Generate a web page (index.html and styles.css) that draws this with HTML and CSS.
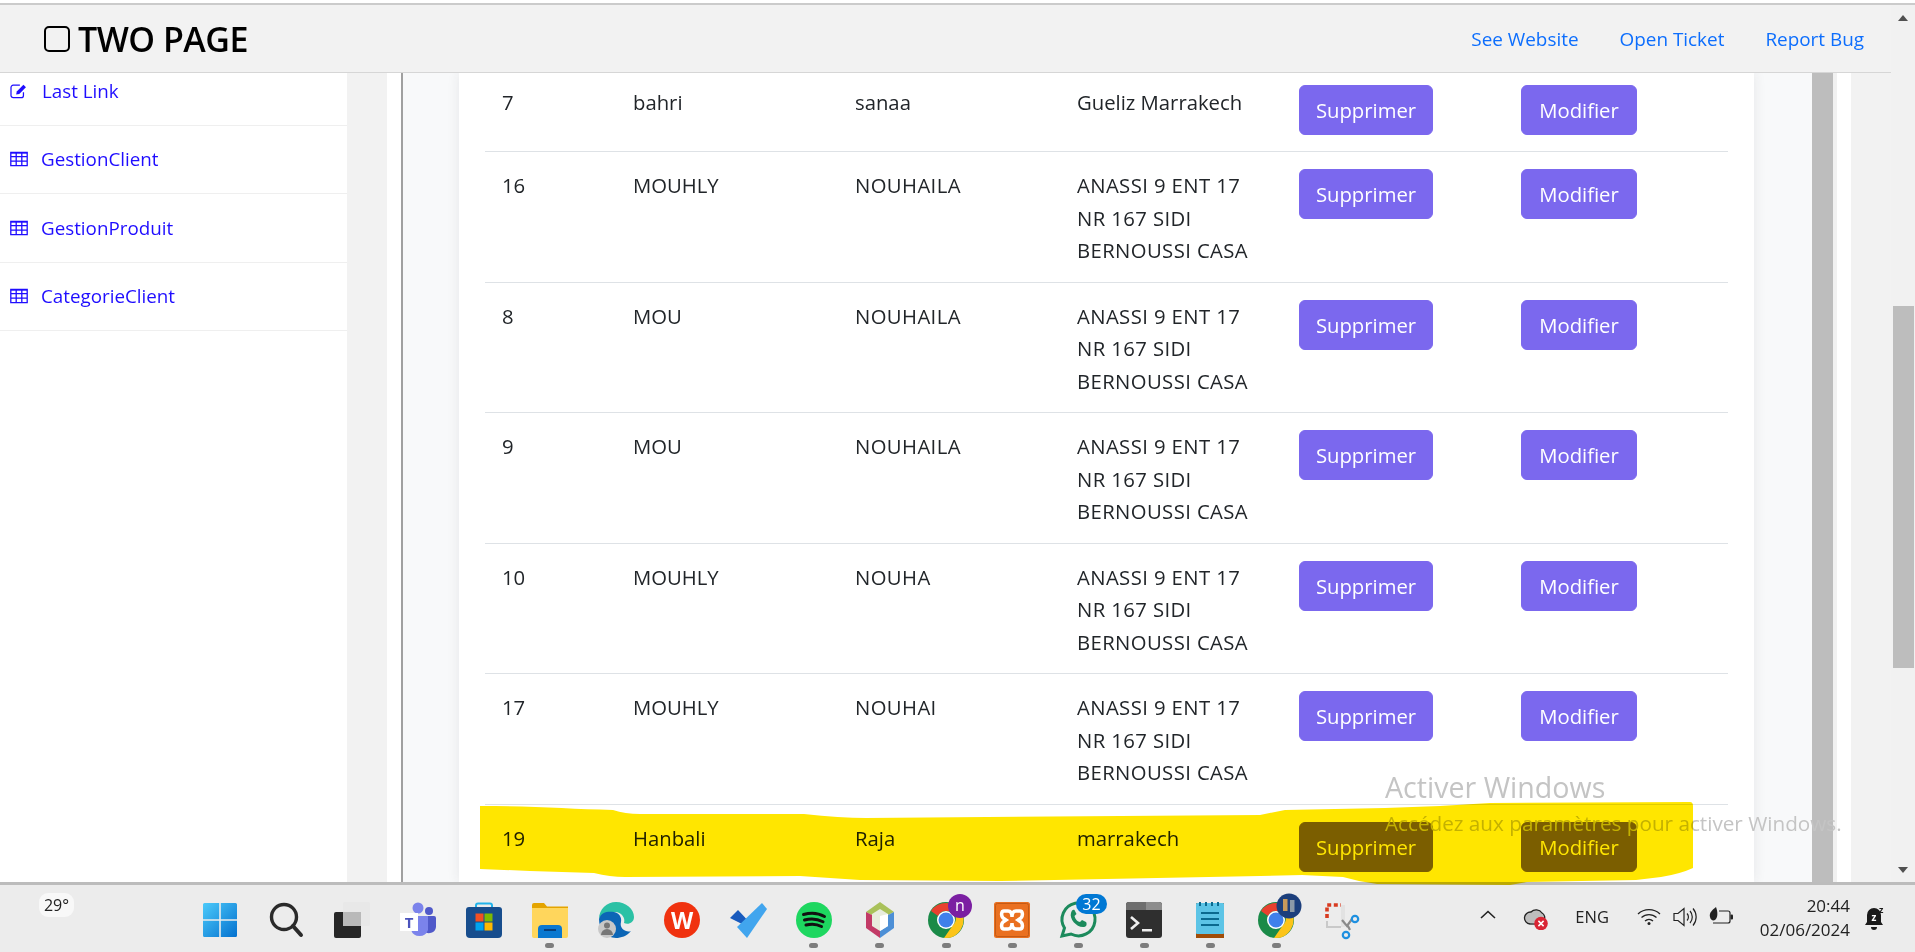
FILE: index.html
```html
<!DOCTYPE html>
<html lang="fr">
<head>
<meta charset="utf-8">
<title>TWO PAGE</title>
<link rel="stylesheet" href="styles.css">
</head>
<body>
<div class="screen">
  <div class="topline"></div>
  <div class="window">
    <div class="app">
      <header class="header">
        <div class="brand"><span class="brand-box"></span><span>TWO PAGE</span></div>
        <nav class="toplinks"><a>See Website</a><a>Open Ticket</a><a>Report Bug</a></nav>
      </header>
      <div class="main">
        <aside class="sidebar">
          <a class="side-item first">
            <svg class="side-icon" viewBox="0 0 20 18"><path d="M15 10.500V14a2.500 2.500 0 0 1-2.500 2.500h-9A2.500 2.500 0 0 1 1 14V5a2.500 2.500 0 0 1 2.500-2.500H11" fill="none" stroke="#1f0dff" stroke-width="1.400"/><path d="M7.500 9.500 15 2l2.800 2.800-7.500 7.500-3.500.6z" fill="#1f0dff"/></svg>
            <span class="side-text wide">Last Link</span>
          </a>
          <a class="side-item">
            <svg class="side-icon" viewBox="0 0 18 15"><path d="M.8.8h16.400v13.400H.8zM.8 5.200h16.400M.8 9.700h16.400M6.200 1v13M11.800 1v13" fill="none" stroke="#1f0dff" stroke-width="1.300"/><path d="M.8.8h16.400V2.200H.8z" fill="#1f0dff"/></svg>
            <span class="side-text">GestionClient</span>
          </a>
          <a class="side-item">
            <svg class="side-icon" viewBox="0 0 18 15"><path d="M.8.8h16.400v13.400H.8zM.8 5.200h16.400M.8 9.700h16.400M6.200 1v13M11.800 1v13" fill="none" stroke="#1f0dff" stroke-width="1.300"/><path d="M.8.8h16.400V2.200H.8z" fill="#1f0dff"/></svg>
            <span class="side-text">GestionProduit</span>
          </a>
          <a class="side-item">
            <svg class="side-icon" viewBox="0 0 18 15"><path d="M.8.8h16.400v13.400H.8zM.8 5.200h16.400M.8 9.700h16.400M6.200 1v13M11.800 1v13" fill="none" stroke="#1f0dff" stroke-width="1.300"/><path d="M.8.8h16.400V2.200H.8z" fill="#1f0dff"/></svg>
            <span class="side-text">CategorieClient</span>
          </a>
        </aside>
        <div class="gutter"></div>
        <div class="gutter-white"></div>
        <div class="panel">
          <div class="card">
            <table class="clients">
              <colgroup><col class="c1"><col class="c2"><col class="c3"><col class="c4"><col class="c5"><col class="c6"></colgroup>
              <tbody>
                <tr class="cut"><td>7</td><td>bahri</td><td>sanaa</td><td>Gueliz Marrakech</td><td><button class="btn btn-del">Supprimer</button></td><td><button class="btn btn-edit">Modifier</button></td></tr>
                <tr><td>16</td><td>MOUHLY</td><td class="up">NOUHAILA</td><td class="up">ANASSI 9 ENT 17<br>NR 167 SIDI<br>BERNOUSSI CASA</td><td><button class="btn btn-del">Supprimer</button></td><td><button class="btn btn-edit">Modifier</button></td></tr>
                <tr><td>8</td><td>MOU</td><td class="up">NOUHAILA</td><td class="up">ANASSI 9 ENT 17<br>NR 167 SIDI<br>BERNOUSSI CASA</td><td><button class="btn btn-del">Supprimer</button></td><td><button class="btn btn-edit">Modifier</button></td></tr>
                <tr><td>9</td><td>MOU</td><td class="up">NOUHAILA</td><td class="up">ANASSI 9 ENT 17<br>NR 167 SIDI<br>BERNOUSSI CASA</td><td><button class="btn btn-del">Supprimer</button></td><td><button class="btn btn-edit">Modifier</button></td></tr>
                <tr><td>10</td><td>MOUHLY</td><td class="up">NOUHA</td><td class="up">ANASSI 9 ENT 17<br>NR 167 SIDI<br>BERNOUSSI CASA</td><td><button class="btn btn-del">Supprimer</button></td><td><button class="btn btn-edit">Modifier</button></td></tr>
                <tr><td>17</td><td>MOUHLY</td><td class="up">NOUHAI</td><td class="up">ANASSI 9 ENT 17<br>NR 167 SIDI<br>BERNOUSSI CASA</td><td><button class="btn btn-del">Supprimer</button></td><td><button class="btn btn-edit">Modifier</button></td></tr>
                <tr><td>19</td><td>Hanbali</td><td>Raja</td><td>marrakech</td><td><button class="btn btn-del">Supprimer</button></td><td><button class="btn btn-edit">Modifier</button></td></tr>
              </tbody>
            </table>
          </div>
        </div>
        <div class="inner-thumb"></div>
        <div class="inner-rail"></div>
        <div class="inner-white"></div>
        <div class="inner-right"></div>
      </div>
    </div>
    <div class="scrollbar">
      <span class="arrow-up"></span>
      <span class="thumb"></span>
      <span class="arrow-down"></span>
    </div>
  </div>
  <footer class="taskbar">
    <div class="weather">29°</div>
    <div class="apps">
      <div class="slot"><svg viewBox="0 0 36 36"><defs><linearGradient id="w" x1="0" y1="0" x2="1" y2="1"><stop offset="0" stop-color="#4ccafa"/><stop offset="1" stop-color="#0471cf"/></linearGradient></defs><path d="M1 2.500A1.500 1.500 0 0 1 2.500 1H17.200V17.200H1zM18.800 1H33.500A1.500 1.500 0 0 1 35 2.500V17.200H18.800zM1 18.800H17.200V35H2.500A1.500 1.500 0 0 1 1 33.500zM18.800 18.800H35V33.500A1.500 1.500 0 0 1 33.500 35H18.800z" fill="url(#w)"/></svg></div>
      <div class="slot"><svg viewBox="0 0 36 36"><circle cx="16" cy="15" r="12.500" fill="none" stroke="#2a2a2a" stroke-width="3.400"/><path d="M25 24l8 9" stroke="#2a2a2a" stroke-width="4" stroke-linecap="round"/></svg></div>
      <div class="slot"><svg viewBox="0 0 36 36"><rect x="0" y="10" width="27" height="26" rx="2" fill="#262626"/><rect x="9" y="0" width="27" height="24" rx="2" fill="#e8e8e8"/><rect x="9" y="10" width="18" height="14" fill="#b9b9b9"/></svg></div>
      <div class="slot"><svg viewBox="0 0 36 36"><circle cx="18" cy="6" r="5.500" fill="#7b83eb"/><circle cx="29" cy="9" r="4" fill="#5059c9"/><path d="M24 14h10a2 2 0 0 1 2 2v9a7 7 0 0 1-12 4z" fill="#5059c9"/><path d="M11 14h17v14a9 9 0 0 1-17 0z" fill="#7b83eb"/><rect x="0" y="11" width="18" height="18" fill="#fff"/><text x="9" y="25.500" class="t-teams">T</text></svg></div>
      <div class="slot"><svg viewBox="0 0 36 36"><path d="M10 6V3.500A2 2 0 0 1 12 1.500h12a2 2 0 0 1 2 2V6" fill="none" stroke="#21b3ea" stroke-width="2"/><path d="M3 5h30a3 3 0 0 1 3 3v24a4 4 0 0 1-4 4H4a4 4 0 0 1-4-4V8a3 3 0 0 1 3-3z" fill="#174d8d"/><rect x="9.500" y="11.500" width="8" height="8" fill="#f25022"/><rect x="18.500" y="11.500" width="8" height="8" fill="#7fba00"/><rect x="9.500" y="20.500" width="8" height="8" fill="#00a4ef"/><rect x="18.500" y="20.500" width="8" height="8" fill="#ffb900"/></svg></div>
      <div class="slot"><svg viewBox="0 0 36 36"><path d="M0 3a2 2 0 0 1 2-2h10l3 3.500H36V6H0z" fill="#e4a400"/><path d="M0 6h36v28a2 2 0 0 1-2 2H2a2 2 0 0 1-2-2z" fill="#ffd65c"/><path d="M6 36v-9a4 4 0 0 1 4-4h16a4 4 0 0 1 4 4v9z" fill="#0a78d0"/><rect x="12" y="27" width="12" height="2" fill="#073f7c"/></svg><i class="dot"></i></div>
      <div class="slot"><svg viewBox="0 0 36 36"><path d="M1 17C1 7 9 0 18 0c10 0 18 7 18 15 0 6-6 8-10 6 2-6-4-12-10-11C9 11 3 12 1 17z" fill="#2bc1a5"/><path d="M1 17C3 10 10 9 16 10c5 1 8 5 7 10-2 7 6 11 10 9-4 5-10 7-15 7C8 36 1 27 1 17z" fill="#0c66b6"/><circle cx="9" cy="27" r="9" fill="#c8c8c8"/><circle cx="9" cy="23.500" r="3" fill="#777"/><path d="M3 33a6 6 0 0 1 12 0z" fill="#777"/></svg></div>
      <div class="slot"><svg viewBox="0 0 36 36"><circle cx="18" cy="18" r="18" fill="#f0320f"/><text x="18" y="27" class="t-wps">W</text></svg></div>
      <div class="slot"><svg viewBox="0 0 36 36"><path d="M14 23 0 16l8-8 14 15z" fill="#185abd"/><path d="M17 36 7 25 32 1l5 6z" fill="#41a5ee"/></svg></div>
      <div class="slot"><svg viewBox="0 0 36 36"><circle cx="18" cy="18" r="18" fill="#1ed760"/><path d="M7.500 12.500c7-2 15-1.500 21 2M8.500 18c6-1.700 13-1.200 18.500 1.800M10 23c5-1.300 11-1 15.500 1.500" fill="none" stroke="#111" stroke-width="3" stroke-linecap="round"/></svg><i class="dot"></i></div>
      <div class="slot"><svg viewBox="0 0 36 36"><path d="M18 0 32 10 18 17 4 10z" fill="#a9c15a"/><path d="M4 10 18 17V36L4 26z" fill="#c23a66"/><path d="M32 10 18 17V36l14-10z" fill="#4d8fd6"/><path d="M18 7 26 12 26 24 18 29 10 24 10 12z" fill="#e8ecdd"/><path d="M18 14 26 12 26 24 18 29z" fill="#fff"/></svg><i class="dot"></i></div>
      <div class="slot"><svg viewBox="0 0 36 36"><circle cx="18" cy="18" r="18" fill="#1a8a48"/><path d="M3 9A18 18 0 0 1 33 9L18 9a9 9 0 0 0-8 5z" fill="#e8402f"/><path d="M33 9A18 18 0 0 1 16 36L25 23a9 9 0 0 0-1-14z" fill="#fcc419"/><circle cx="18" cy="18" r="9" fill="#fff"/><circle cx="18" cy="18" r="7.500" fill="#3f80ea"/><circle cx="32" cy="4" r="12" fill="#7b1fa2"/><text x="32" y="9" class="t-badge">n</text></svg><i class="dot"></i></div>
      <div class="slot"><svg viewBox="0 0 36 36"><rect width="36" height="36" rx="2.500" fill="#ea7020"/><rect x="1.500" y="1.500" width="33" height="33" rx="2" fill="none" stroke="#c45a15"/><path d="M10 9h4c3 0 4 3 4 6 0-3 1-6 4-6h4c3 0 3 5 1 7l-3 2 3 2c2 2 2 7-1 7h-4c-3 0-4-3-4-6 0 3-1 6-4 6h-4c-3 0-3-5-1-7l3-2-3-2c-2-2-2-7 1-7z" fill="none" stroke="#fff" stroke-width="3.500"/></svg><i class="dot"></i></div>
      <div class="slot"><svg viewBox="0 0 36 36"><path d="M2 34l2.500-8A16.500 16.500 0 1 1 11 32z" fill="none" stroke="#1c8a5c" stroke-width="3"/><path d="M11 11c-2 6 6 15 13 14 3 0 3-4 2-5l-4-2-2 2c-2 0-5-3-5.500-6l2-2-2-4c-1-1-3 0-3.500 3z" fill="#1c8a5c"/><rect x="16" y="-8" width="31" height="20" rx="10" fill="#0078d4"/><text x="31.500" y="7.500" class="t-badge">32</text></svg><i class="dot"></i></div>
      <div class="slot"><svg viewBox="0 0 36 36"><path d="M3 0h30a3 3 0 0 1 3 3v30a3 3 0 0 1-3 3H3a3 3 0 0 1-3-3V3a3 3 0 0 1 3-3z" fill="#2f2f2f"/><path d="M0 3a3 3 0 0 1 3-3h17v8H0z" fill="#6e6e6e"/><path d="M20 0h13a3 3 0 0 1 3 3v5H20z" fill="#8c8c8c"/><path d="M5 15l7 6-7 6" fill="none" stroke="#eee" stroke-width="2.600"/><rect x="16" y="27" width="10" height="2.500" fill="#eee"/></svg><i class="dot"></i></div>
      <div class="slot"><svg viewBox="0 0 36 36"><rect x="4" y="1" width="28" height="35" fill="#a04c08"/><rect x="4" y="1" width="28" height="31" rx="1" fill="#5cc4e6"/><path d="M8 0v4M14 0v4M20 0v4M26 0v4" stroke="#0b6a8f" stroke-width="2"/><path d="M9 11h18M9 17h18M9 23h18" stroke="#0b6a8f" stroke-width="2.200"/></svg><i class="dot"></i></div>
      <div class="slot"><svg viewBox="0 0 36 36"><circle cx="18" cy="18" r="18" fill="#1a8a48"/><path d="M3 9A18 18 0 0 1 33 9L18 9a9 9 0 0 0-8 5z" fill="#e8402f"/><path d="M33 9A18 18 0 0 1 16 36L25 23a9 9 0 0 0-1-14z" fill="#fcc419"/><circle cx="18" cy="18" r="9" fill="#fff"/><circle cx="18" cy="18" r="7.500" fill="#3f80ea"/><circle cx="31" cy="4" r="12.500" fill="#1c3f7c"/><rect x="25" y="-3" width="4.500" height="12" fill="#c79a5c"/><rect x="32" y="-2" width="4.500" height="12" fill="#8c9aa8"/></svg><i class="dot"></i></div>
      <div class="slot"><svg viewBox="0 0 36 36"><path d="M3 16V3h14" fill="none" stroke="#d83b20" stroke-width="3.600" stroke-dasharray="4 2.600"/><path d="M3 19v6h14" fill="none" stroke="#c9c9c9" stroke-width="2"/><path d="M17 3h4v22h-4z" fill="#e2e2e2"/><path d="M18 18l5 6 5-7M24 24l2 4" fill="none" stroke="#8a8a8a" stroke-width="2.200"/><circle cx="31" cy="17" r="3.200" fill="none" stroke="#1e90e0" stroke-width="2.200"/><circle cx="22" cy="33" r="3.200" fill="none" stroke="#1e90e0" stroke-width="2.200"/></svg></div>
    </div>
    <div class="tray">
      <svg class="tray-chev" viewBox="0 0 16 9"><path d="M1 8l7-6.500L15 8" fill="none" stroke="#222" stroke-width="1.600"/></svg>
      <svg class="tray-cloud" viewBox="0 0 25 22"><path d="M7 16a6 6 0 0 1 1-12 7 7 0 0 1 11 1 5 5 0 0 1 2 7" fill="#bdbdbd" stroke="#222" stroke-width="1.300"/><path d="M7 16h9" stroke="#222" stroke-width="1.300"/><circle cx="18" cy="15.500" r="6.800" fill="#d92534"/><path d="M15.400 12.900l5.200 5.200M20.600 12.900l-5.200 5.200" stroke="#fff" stroke-width="1.500"/></svg>
      <span class="tray-lang">ENG</span>
      <svg class="tray-wifi" viewBox="0 0 24 17"><path d="M1 6a16 16 0 0 1 22 0M4.500 9.500a11 11 0 0 1 15 0M8 13a6 6 0 0 1 8 0" fill="none" stroke="#222" stroke-width="1.300"/><circle cx="12" cy="15.500" r="1.500" fill="#222"/></svg>
      <svg class="tray-vol" viewBox="0 0 24 20"><path d="M1 6.500h4L11 1.500v17l-6-5H1z" fill="none" stroke="#222" stroke-width="1.200"/><path d="M14 6.500a5 5 0 0 1 0 7M17 4a9 9 0 0 1 0 12M20 1.500a13 13 0 0 1 0 17" fill="none" stroke="#222" stroke-width="1.200"/></svg>
      <svg class="tray-bat" viewBox="0 0 24 20"><path d="M10 4h9a2 2 0 0 1 2 2v8a2 2 0 0 1-2 2H4" fill="none" stroke="#222" stroke-width="1.200"/><rect x="21.500" y="7.500" width="2.500" height="5" rx="1" fill="#222"/><path d="M7 0C3 3 0 6 1 10c.5 3 3 4 5 3 3-2 3-8 1-13z" fill="#222"/></svg>
      <div class="clock"><span>20:44</span><span>02/06/2024</span></div>
      <svg class="tray-bell" viewBox="0 0 21 25"><path d="M10 3a7 7 0 0 1 7 7v7l2 3H1l2-3v-7a7 7 0 0 1 7-7z" fill="#1b1b1b"/><path d="M7 22a3 3 0 0 0 6 0z" fill="#1b1b1b"/><text x="10" y="15.500" class="t-bell">z</text><text x="15" y="8" class="t-bell2">z</text></svg>
    </div>
  </footer>
  <div class="watermark"><div class="wm-title">Activer Windows</div><div class="wm-sub">Accédez aux paramètres pour activer Windows.</div></div>
  <svg class="highlight" viewBox="0 0 1915 952"><path d="M480 806 C530 806 570 809 613 810 Q625 814 640 814 L804 814 Q840 818 866 818 L1260 815 L1285 810 L1385 808 L1440 806 L1490 803 L1690 802 Q1693 802 1693 806 L1693 868 Q1680 874 1661 877 L1636 880 L1527 882 L1510 885 L1377 884 Q1360 882 1343 877 L1302 875 L1260 876 L1000 881 L860 880 L800 876 L625 877 Q610 877 594 873 L530 871 L480 869 Z" fill="#ffe600"/></svg>
</div>
</body>
</html>
```
FILE: styles.css
```css
* { box-sizing: border-box; }
html, body { margin: 0; height: 100%; overflow: hidden; background: #fff; }
body { font-family: "Open Sans", "Noto Sans", sans-serif; color: #212529; }
.screen { position: relative; width: 1915px; height: 952px; display: flex; flex-direction: column; }
.topline { height: 5px; flex: none; background: #fff; border-bottom: 2px solid #cbcbcb; }
.window { flex: 1; min-height: 0; display: flex; }
.app { width: 1891px; flex: none; display: flex; flex-direction: column; }

.header { height: 68px; flex: none; background: #f2f2f2; border-bottom: 1px solid #d6d6d6; display: flex; align-items: center; justify-content: space-between; padding: 0 27px 0 44px; }
.brand { display: flex; align-items: center; gap: 8px; font-size: 34px; font-weight: 600; color: #000; letter-spacing: -0.5px; padding-top: 1px; }
.brand-box { width: 26px; height: 26px; border: 2.500px solid #000; border-radius: 5px; }
.toplinks { display: flex; gap: 41px; font-size: 18.900px; color: #0d6efd; }

.main { flex: 1; min-height: 0; display: flex; overflow: hidden; }
.sidebar { width: 347px; flex: none; background: #fff; }
.side-item { display: flex; align-items: center; height: 68.400px; padding: 0 0 1px 10px; border-bottom: 1px solid #efefef; color: #1f0dff; font-size: 18.800px; }
.side-item.first { height: 53px; padding: 0 0 17px 10px; }
.side-icon { width: 18px; height: 16px; flex: none; }
.side-text { margin-left: 13px; }
.side-text.wide { margin-left: 14px; }
.gutter { width: 40px; flex: none; background: #f2f2f2; }
.gutter-white { width: 14px; flex: none; background: #fff; }
.panel { width: 1411px; flex: none; background: #f8f9fa; border-left: 2px solid #a0a0a0; padding: 0 58px 0 56px; }
.card { height: 100%; background: #fff; padding: 0 26px; box-shadow: 0 0 12px rgba(40, 40, 60, 0.09); }
.inner-thumb { width: 21px; flex: none; background: #bdbdbd; }
.inner-rail { width: 4px; flex: none; background: #f1f1f1; }
.inner-white { width: 14px; flex: none; background: #fff; }
.inner-right { flex: 1; background: #f2f2f2; }

.clients { width: 1243px; table-layout: fixed; border-collapse: collapse; font-size: 20.300px; line-height: 32.500px; }
.c1 { width: 131px; } .c2, .c3, .c4, .c5 { width: 222px; } .c6 { width: 224px; }
.clients td { padding: 17px 17px 15px; vertical-align: top; border-bottom: 1px solid #dee2e6; }
.clients td.up { letter-spacing: 0.4px; }
.clients tr.cut td { padding: 13px 17px 16px; }
.clients tr.cut .btn { margin-top: -1px; }
.clients tr:last-child td { border-bottom: 0; }
.btn { height: 50px; padding: 0; border: 1px solid #7b68ee; border-radius: 6px; background: #7b68ee; color: #fff; font: 20.300px "Open Sans", sans-serif; display: block; }
.btn-del { width: 134px; }
.btn-edit { width: 116px; }

.scrollbar { position: relative; width: 24px; flex: none; background: #f1f1f1; }
.thumb { position: absolute; top: 301px; left: 2px; width: 21px; height: 362px; background: #bdbdbd; }
.arrow-up, .arrow-down { position: absolute; left: 7px; width: 0; height: 0; border-left: 5.500px solid transparent; border-right: 5.500px solid transparent; }
.arrow-up { top: 10px; border-bottom: 6px solid #505050; }
.arrow-down { top: 862px; border-top: 6px solid #505050; }

.taskbar { height: 70px; flex: none; background: #ececec; border-top: 3px solid #bcbcbc; display: flex; align-items: flex-start; }
.weather { margin: 8px 0 0 39px; width: 35px; height: 24px; border-radius: 9px; background: #f8f8f8; font-size: 16px; line-height: 24px; text-align: center; color: #222; }
.apps { display: flex; margin: 0 0 0 112.500px; padding-top: 17px; }
.slot { width: 66.050px; height: 50px; display: flex; flex-direction: column; align-items: center; }
.slot svg { width: 36px; height: 36px; overflow: visible; flex: none; }
.dot { width: 9px; height: 5px; margin-top: 5px; border-radius: 3px; background: #7d7d7d; }
.t-teams { font: 700 15px "Open Sans", sans-serif; fill: #4b53bc; text-anchor: middle; }
.t-wps { font: 700 23px "Open Sans", sans-serif; fill: #fff; text-anchor: middle; }
.t-badge { font: 16px "Open Sans", sans-serif; fill: #fff; text-anchor: middle; }
.t-bell { font: 700 10px "Open Sans", sans-serif; fill: #fff; text-anchor: middle; }
.t-bell2 { font: 700 9px "Open Sans", sans-serif; fill: #1b1b1b; }

.tray { position: relative; flex: 1; height: 67px; }
.tray-chev { position: absolute; left: 105px; top: 25px; width: 16px; height: 9px; }
.tray-cloud { position: absolute; left: 148px; top: 23px; width: 25px; height: 22px; }
.tray-lang { position: absolute; left: 200px; top: 20px; font-size: 16.500px; color: #222; }
.tray-wifi { position: absolute; left: 262px; top: 23px; width: 24px; height: 17px; }
.tray-vol { position: absolute; left: 298px; top: 22px; width: 24px; height: 20px; }
.tray-bat { position: absolute; left: 334px; top: 22px; width: 24px; height: 20px; }
.clock { position: absolute; right: 65px; top: 9px; display: flex; flex-direction: column; align-items: flex-end; font-size: 17px; line-height: 24px; color: #222; }
.tray-bell { position: absolute; left: 489px; top: 20px; width: 21px; height: 25px; overflow: visible; }

.watermark { position: absolute; left: 1385px; top: 769px; color: #c4c4c4; }
.wm-title { font-size: 28.600px; line-height: 36px; }
.wm-sub { font-size: 20.700px; line-height: 36px; white-space: nowrap; }
.highlight { position: absolute; left: 0; top: 0; width: 1915px; height: 952px; mix-blend-mode: multiply; pointer-events: none; }
```
